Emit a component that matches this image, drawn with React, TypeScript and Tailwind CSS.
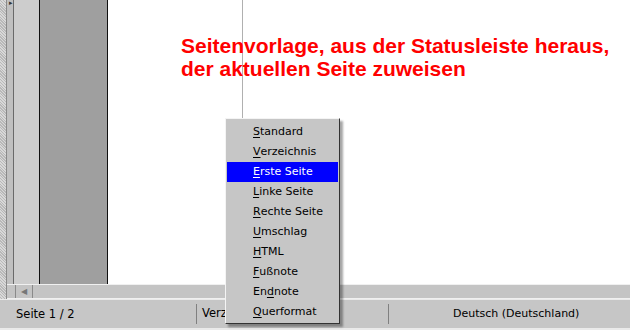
import React from 'react';

const menuItems: { pre: string; key: string; post: string }[] = [
  { pre: '', key: 'S', post: 'tandard' },
  { pre: '', key: 'V', post: 'erzeichnis' },
  { pre: '', key: 'E', post: 'rste Seite' },
  { pre: '', key: 'L', post: 'inke Seite' },
  { pre: '', key: 'R', post: 'echte Seite' },
  { pre: '', key: 'U', post: 'mschlag' },
  { pre: '', key: 'H', post: 'TML' },
  { pre: '', key: 'F', post: 'ußnote' },
  { pre: 'En', key: 'd', post: 'note' },
  { pre: '', key: 'Q', post: 'uerformat' },
];

const ui = { fontFamily: '"DejaVu Sans", sans-serif' };

export default function App() {
  return (
    <div
      className="relative w-[630px] h-[330px] overflow-hidden flex flex-col bg-[#c6c6c6] text-black"
      style={ui}
    >
      {/* document area */}
      <div className="flex h-[299px]">
        <div className="w-[6px] bg-[repeating-linear-gradient(45deg,#d8d8d8_0,#d8d8d8_1px,#b8b8b8_1px,#b8b8b8_2px)]" />
        <div className="flex-1 flex flex-col border-l border-[#8a8a8a]">
          <div className="flex-1 flex">
            <div className="relative w-[7px] bg-[#c0c0c0] border-r border-[#6a6a6a]">
              <span className="absolute left-[2px] top-0 text-[7px] leading-none text-[#333]">▸</span>
            </div>
            <div className="w-[26px] bg-[#cdcdcd] border-r border-[#111]" />
            <div className="w-[68px] bg-[#9f9f9f] border-r border-[#111]" />
            <div className="relative flex-1 bg-white pl-[73px] pt-[34px]">
              <div className="absolute left-[134px] top-0 w-px h-[118px] bg-[#b0b0b0]" />
              <p
                className="relative text-[#ff0000] font-bold text-[21px] leading-[23px]"
                style={{ fontFamily: '"Liberation Sans", Arial, sans-serif' }}
              >
                Seitenvorlage, aus der Statusleiste heraus,
                <br />
                der aktuellen Seite zuweisen
              </p>
            </div>
          </div>
          {/* horizontal scrollbar */}
          <div className="h-[15px] flex border-t border-[#f0f0f0] border-b border-[#555] bg-[#c4c4c4]">
            <div className="w-[9px] border-r border-[#8a8a8a]" />
            <div className="w-[17px] flex items-center justify-center border-r border-[#8a8a8a] text-[#777] text-[8px] leading-none">
              ◀
            </div>
            <div className="flex-1" />
          </div>
        </div>
      </div>

      {/* status bar */}
      <div className="flex-1 flex items-center text-[11.5px] border-b-2 border-[#444] border-t border-[#eaeaea]">
        <div className="w-[197px] pl-[16px] pt-[1px] border-r border-[#808080] h-[20px] flex items-center">
          Seite 1 / 2
        </div>
        <div className="w-[192px] pl-[5px] border-r border-[#808080] h-[20px] flex items-center">
          Verzeichnis
        </div>
        <div className="flex-1 pl-[64px] text-[11px]">Deutsch (Deutschland)</div>
      </div>

      {/* context menu */}
      <div className="absolute left-[225px] top-[118px] w-[115px] bg-[#c6c6c6] border-t border-l border-[#f4f4f4] border-r border-b border-r-[#333] border-b-[#333] shadow-[3px_3px_2px_rgba(0,0,0,0.35)] pt-[3px] pb-[1px] px-[1px] text-[11px]">
        {menuItems.map((m, i) => (
          <div
            key={i}
            className={
              'h-[20px] flex items-center pl-[26px] ' +
              (i === 2 ? 'bg-[#0000ff] text-white' : '')
            }
          >
            {m.pre}
            <span className="underline underline-offset-2">{m.key}</span>
            {m.post}
          </div>
        ))}
      </div>
    </div>
  );
}
